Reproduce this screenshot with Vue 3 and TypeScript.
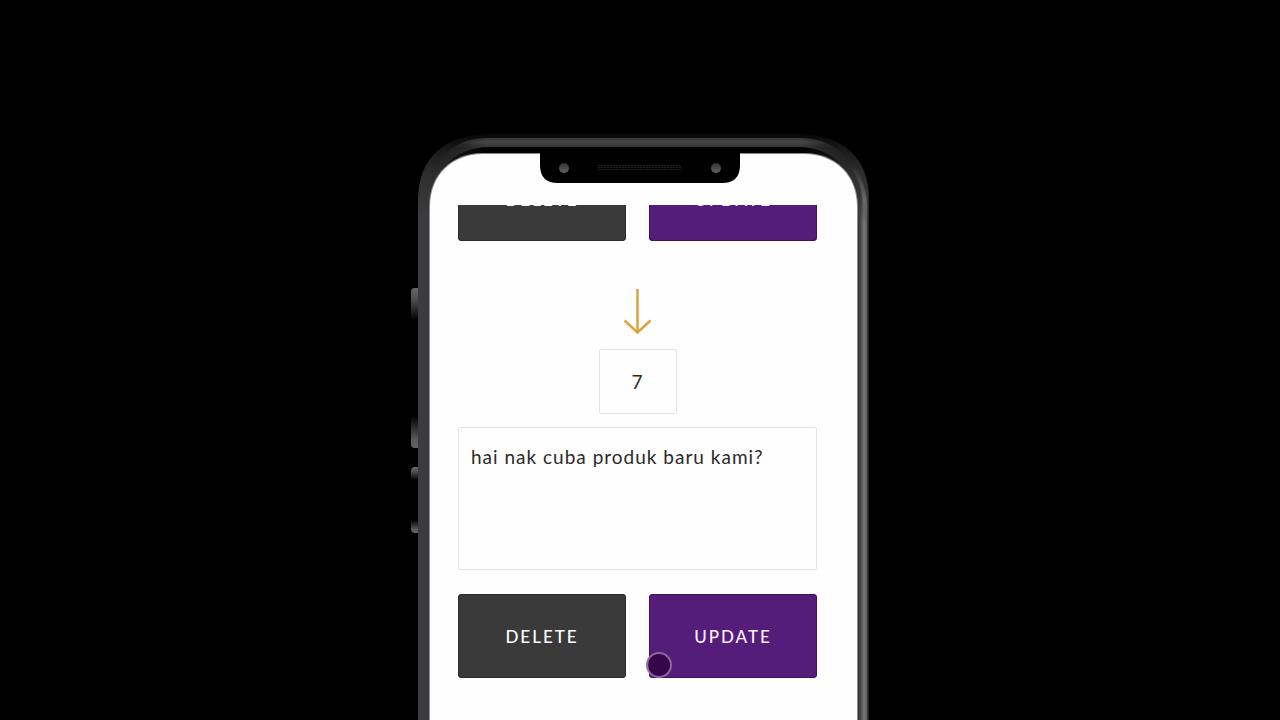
<script setup lang="ts">
import { ref } from 'vue'

const step = ref<string>('7')
const message = ref<string>('hai nak cuba produk baru kami?')
</script>

<template>
  <main class="stage">
    <section class="phone">
      <svg class="frame" width="464" height="760" viewBox="408 130 464 760" aria-hidden="true">
        <defs>
          <linearGradient id="body" gradientUnits="userSpaceOnUse" x1="0" y1="134" x2="0" y2="215">
            <stop offset="0" stop-color="#080809" />
            <stop offset="0.2" stop-color="#1a1a1b" />
            <stop offset="0.5" stop-color="#2e2e2f" />
            <stop offset="1" stop-color="#3c3c3e" />
          </linearGradient>
          <linearGradient id="bar" gradientUnits="userSpaceOnUse" x1="0" y1="138" x2="0" y2="200">
            <stop offset="0" stop-color="#363638" />
            <stop offset="0.07" stop-color="#464648" />
            <stop offset="0.16" stop-color="#313133" />
            <stop offset="0.5" stop-color="#38383a" />
            <stop offset="1" stop-color="#3c3c3e" />
          </linearGradient>
          <linearGradient id="ends" gradientUnits="userSpaceOnUse" x1="436" y1="0" x2="852" y2="0">
            <stop offset="0" stop-color="#000000" />
            <stop offset="0.12" stop-color="#ffffff" />
            <stop offset="0.88" stop-color="#ffffff" />
            <stop offset="1" stop-color="#000000" />
          </linearGradient>
          <mask id="barMask" maskUnits="userSpaceOnUse" x="408" y="130" width="464" height="120">
            <rect x="408" y="130" width="464" height="120" fill="url(#ends)" />
          </mask>
          <linearGradient id="side" gradientUnits="userSpaceOnUse" x1="857" y1="0" x2="869" y2="0">
            <stop offset="0" stop-color="#2c2c2d" />
            <stop offset="0.3" stop-color="#484848" />
            <stop offset="0.6" stop-color="#7c7c7c" />
            <stop offset="0.8" stop-color="#606060" />
            <stop offset="0.92" stop-color="#252526" />
            <stop offset="1" stop-color="#161617" />
          </linearGradient>
          <linearGradient id="shine" gradientUnits="userSpaceOnUse" x1="0" y1="165" x2="0" y2="225">
            <stop offset="0" stop-color="#5c5c5c" stop-opacity="0" />
            <stop offset="0.6" stop-color="#6a6a6a" />
            <stop offset="1" stop-color="#6a6a6a" stop-opacity="0" />
          </linearGradient>
          <linearGradient id="fade" gradientUnits="userSpaceOnUse" x1="0" y1="190" x2="0" y2="225">
            <stop offset="0" stop-color="#000000" />
            <stop offset="1" stop-color="#ffffff" />
          </linearGradient>
          <mask id="sideMask" maskUnits="userSpaceOnUse" x="857" y="130" width="14" height="760">
            <rect x="857" y="130" width="14" height="760" fill="url(#fade)" />
          </mask>
          <linearGradient id="key" x1="0" y1="0" x2="0" y2="1">
            <stop offset="0" stop-color="#686868" />
            <stop offset="0.08" stop-color="#4a4a4a" />
            <stop offset="0.2" stop-color="#000000" />
            <stop offset="0.8" stop-color="#000000" />
            <stop offset="0.95" stop-color="#5c5c5c" />
            <stop offset="1" stop-color="#626262" />
          </linearGradient>
          <linearGradient id="lens" x1="0" y1="0" x2="0" y2="1">
            <stop offset="0" stop-color="#303030" />
            <stop offset="1" stop-color="#626262" />
          </linearGradient>
          <pattern id="grille" patternUnits="userSpaceOnUse" x="598" y="165" width="3" height="2">
            <rect width="2" height="1" fill="#242424" />
          </pattern>
        </defs>
        <rect x="411" y="288" width="12" height="160" rx="4" fill="url(#key)" />
        <rect x="411" y="467" width="12" height="66" rx="4" fill="url(#key)" />
        <path d="M418 890V200C418 158 444 134 492 134H796C844 134 869 158 869 200V890Z" fill="url(#body)" />
        <g mask="url(#barMask)">
          <path d="M424 240V207C426 166 448 138 488 138H799C840 138 863 166 864 207V240Z" fill="url(#bar)" />
          <path d="M429 207C431 174 452 147 490 147H797C836 147 857 174 858 207V230H429Z" fill="#020202" />
        </g>
        <path d="M857 890V130H869V890Z" fill="url(#side)" mask="url(#sideMask)" />
        <path d="M815 143C845 149 864 173 865 207V225" fill="none" stroke="url(#shine)" stroke-width="4" />
        <path d="M429 890V207C429 174 452 153 482 153H805C835 153 858 174 858 207V890Z" fill="#8b8b8b" />
        <path d="M430 890V207C430 174 453 154 483 154H804C834 154 857 174 857 207V890Z" fill="#fefefe" />
        <path d="M540 152V165Q540 183 558 183H722Q740 183 740 165V152Z" fill="#000000" />
        <circle cx="564" cy="168" r="5" fill="url(#lens)" />
        <circle cx="716" cy="168" r="5" fill="url(#lens)" />
        <rect x="598" y="165" width="84" height="6" fill="url(#grille)" />
      </svg>

      <div class="screen">
        <div class="actions clipped">
          <button type="button" class="btn delete">DELETE</button>
          <button type="button" class="btn update">UPDATE</button>
        </div>

        <svg class="arrow" width="28" height="46" viewBox="0 0 28 46" aria-hidden="true">
          <path d="M13.5 0V43M0.5 31.5L13.5 43.5L26.5 31.5" fill="none" stroke="#d9a441" stroke-width="2.5" />
        </svg>

        <input v-model="step" class="step" type="text" inputmode="numeric" aria-label="Step" />
        <textarea v-model="message" class="message" aria-label="Message" spellcheck="false"></textarea>

        <div class="actions">
          <button type="button" class="btn delete">DELETE</button>
          <button type="button" class="btn update">UPDATE<span class="touch"></span></button>
        </div>
      </div>
    </section>
  </main>
</template>

<style>
body {
  margin: 0;
  background: #000000;
}
</style>

<style scoped>
.stage {
  box-sizing: border-box;
  height: 100vh;
  padding: 130px 0 0 8px;
  overflow: hidden;
  display: flex;
  justify-content: center;
  align-items: flex-start;
  background: #000000;
  font-family: Lato, "Liberation Sans", sans-serif;
}

.phone {
  position: relative;
  box-sizing: border-box;
  width: 100%;
  max-width: 452px;
  padding: 75px 53px 0 40px;
}

.frame {
  position: absolute;
  top: 0;
  left: -10px;
}

.screen {
  position: relative;
  display: flex;
  flex-direction: column;
  align-items: center;
  clip-path: inset(0 -8px);
}

.actions {
  width: 100%;
  display: grid;
  grid-template-columns: 1fr 1fr;
  gap: 23px;
}

.clipped {
  margin-top: -48px;
}

.btn {
  position: relative;
  height: 84px;
  padding: 2px 0 0;
  border: 0;
  border-radius: 4px;
  color: #ffffff;
  font: 500 17px/24px Lato, "Liberation Sans", sans-serif;
  letter-spacing: 2px;
}

.delete {
  background: #3a3a3a;
  box-shadow: inset 0 0 0 1px #2c2c2c;
}

.update {
  background: #541d79;
  box-shadow: inset 0 0 0 1px #411160;
  color: #fff0ff;
}

.arrow {
  margin: 48px 0 14px;
}

.step,
.message {
  box-sizing: border-box;
  border: 1px solid #e4e4e4;
  border-radius: 2px;
  outline: 0;
  background: #fefefe;
  color: #2a2a2a;
  font: 400 19px/28px Lato, "Liberation Sans", sans-serif;
  letter-spacing: 1px;
}

.step {
  width: 78px;
  height: 65px;
  padding: 0;
  text-align: center;
}

.message {
  display: block;
  width: 100%;
  height: 143px;
  margin: 13px 0 24px;
  padding: 15px 12px;
  resize: none;
}

.touch {
  position: absolute;
  box-sizing: border-box;
  left: -3px;
  bottom: 0;
  width: 26px;
  height: 26px;
  border: 2px solid rgba(190, 150, 205, 0.65);
  border-radius: 50%;
  background: rgba(48, 4, 66, 0.85);
}
</style>
